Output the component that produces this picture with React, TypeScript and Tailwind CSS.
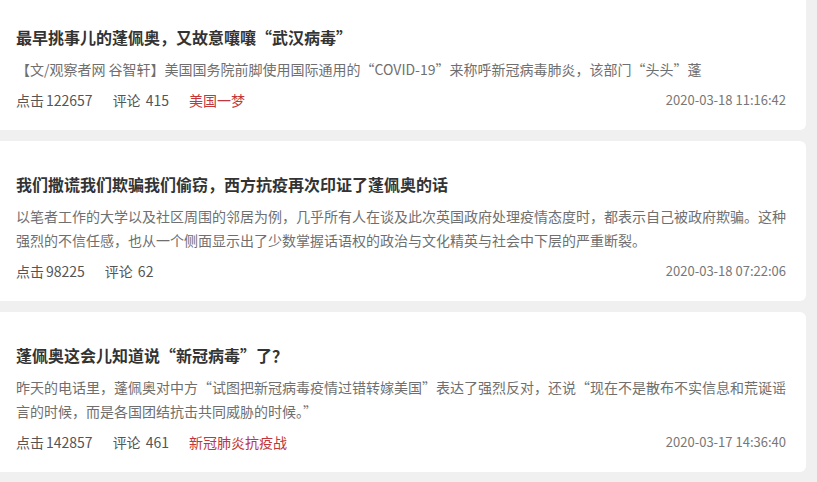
const posts = [
  {
    title: "最早挑事儿的蓬佩奥，又故意嚷嚷“武汉病毒”",
    summary:
      "【文/观察者网 谷智轩】美国国务院前脚使用国际通用的“COVID-19”来称呼新冠病毒肺炎，该部门“头头”蓬",
    clicks: 122657,
    comments: 415,
    tag: "美国一梦",
    time: "2020-03-18 11:16:42",
  },
  {
    title: "我们撒谎我们欺骗我们偷窃，西方抗疫再次印证了蓬佩奥的话",
    summary:
      "以笔者工作的大学以及社区周围的邻居为例，几乎所有人在谈及此次英国政府处理疫情态度时，都表示自己被政府欺骗。这种强烈的不信任感，也从一个侧面显示出了少数掌握话语权的政治与文化精英与社会中下层的严重断裂。",
    clicks: 98225,
    comments: 62,
    tag: "",
    time: "2020-03-18 07:22:06",
  },
  {
    title: "蓬佩奥这会儿知道说“新冠病毒”了？",
    summary:
      "昨天的电话里，蓬佩奥对中方“试图把新冠病毒疫情过错转嫁美国”表达了强烈反对，还说“现在不是散布不实信息和荒诞谣言的时候，而是各国团结抗击共同威胁的时候。”",
    clicks: 142857,
    comments: 461,
    tag: "新冠肺炎抗疫战",
    time: "2020-03-17 14:36:40",
  },
]

const PostCard = ({ data }: { data: (typeof posts)[number] }) => {
  const { title, summary, clicks, comments, tag, time } = data

  return (
    <div className="rounded-r-md bg-white pb-[18px] pl-4 pr-5 pt-[30px]">
      <h2 className="text-[16px] font-bold leading-[26px] text-[#333]">{title}</h2>
      <p className="mt-[7px] text-[14px] leading-[24px] text-[#6f6f6f]">{summary}</p>
      <div className="mt-[7px] flex items-center text-[14px] leading-[24px] text-[#555]">
        <span className="mr-5">
          点击<span className="ml-[2px]">{clicks}</span>
        </span>
        <span className="mr-5">
          评论<span className="ml-[5px]">{comments}</span>
        </span>
        {tag ? <span className="text-[#c0363c]">{tag}</span> : null}
        <span className="ml-auto text-[13px] text-[#777]">{time}</span>
      </div>
    </div>
  )
}

export default function App() {
  return (
    <div
      className="h-[482px] w-[817px] overflow-hidden bg-[#f0f0f0] pr-[11px]"
      style={{ fontFamily: '"Noto Sans CJK SC", "Noto Sans", sans-serif' }}
    >
      <div className="-mt-[6px] flex flex-col gap-[11px]">
        {posts.map((post) => (
          <PostCard key={post.time} data={post} />
        ))}
      </div>
    </div>
  )
}
